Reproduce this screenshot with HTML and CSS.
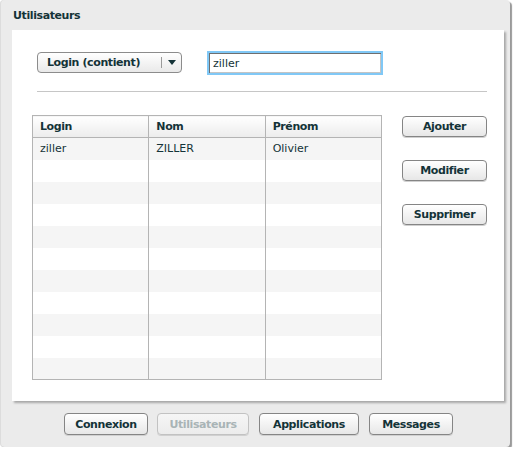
FILE: index.html
```html
<!DOCTYPE html>
<html lang="fr">
<head>
<meta charset="utf-8">
<title>Utilisateurs</title>
<link rel="stylesheet" href="styles.css">
</head>
<body>
<div class="window">
  <div class="window-title">Utilisateurs</div>
  <div class="content">
    <div class="search">
      <div class="combo">
        <span class="combo-label">Login (contient)</span>
        <span class="combo-sep"></span>
        <span class="combo-arrow"></span>
      </div>
      <input class="search-input" type="text" value="ziller">
    </div>
    <div class="divider"></div>
    <div class="main">
      <table class="grid">
        <thead>
          <tr><th>Login</th><th>Nom</th><th>Prénom</th></tr>
        </thead>
        <tbody>
          <tr><td>ziller</td><td>ZILLER</td><td>Olivier</td></tr>
          <tr><td></td><td></td><td></td></tr>
          <tr><td></td><td></td><td></td></tr>
          <tr><td></td><td></td><td></td></tr>
          <tr><td></td><td></td><td></td></tr>
          <tr><td></td><td></td><td></td></tr>
          <tr><td></td><td></td><td></td></tr>
          <tr><td></td><td></td><td></td></tr>
          <tr><td></td><td></td><td></td></tr>
          <tr><td></td><td></td><td></td></tr>
          <tr><td></td><td></td><td></td></tr>
        </tbody>
      </table>
      <div class="actions">
        <button class="btn btn-side">Ajouter</button>
        <button class="btn btn-side">Modifier</button>
        <button class="btn btn-side">Supprimer</button>
      </div>
    </div>
  </div>
  <div class="footer">
    <button class="btn btn-nav w84">Connexion</button>
    <button class="btn btn-nav w92" disabled>Utilisateurs</button>
    <button class="btn btn-nav w100">Applications</button>
    <button class="btn btn-nav w84">Messages</button>
  </div>
</div>
</body>
</html>
```
FILE: styles.css
```css
* { box-sizing: border-box; }
html, body {
  margin: 0;
  padding: 0;
  background: #ffffff;
  font-family: "DejaVu Sans", Verdana, sans-serif;
  font-size: 11px;
  color: #143338;
}
.window {
  width: 510px;
  height: 447px;
  background: #ebebeb;
  border-radius: 4px;
  box-shadow: 2px 2px 1px #9a9a9a, inset 1px 0 0 #dcdcdc;
  display: flex;
  flex-direction: column;
}
.window-title {
  height: 30px;
  padding: 9px 0 0 13px;
  font-weight: bold;
  letter-spacing: -0.4px;
}
.content {
  margin: 0 6px 0 12px;
  height: 371px;
  background: #ffffff;
  box-shadow: 2px 2px 2px #a8a8a8;
  padding: 21px 0 0 0;
}
.search {
  display: flex;
  align-items: flex-start;
  padding-left: 25px;
  height: 24px;
}
.combo {
  margin-top: 1px;
  width: 145px;
  height: 21px;
  border: 1px solid #8c8c8c;
  border-radius: 4px;
  background: linear-gradient(#ffffff, #e9e9e9);
  display: flex;
  align-items: center;
  font-weight: bold;
  letter-spacing: -0.4px;
}
.combo-label {
  padding-left: 9px;
  width: 123px;
}
.combo-sep {
  width: 1px;
  height: 11px;
  background: #9a9a9a;
}
.combo-arrow {
  margin-left: 6px;
  width: 0;
  height: 0;
  border-left: 4px solid transparent;
  border-right: 4px solid transparent;
  border-top: 5px solid #143338;
}
.search-input {
  margin: 0 0 0 25px;
  width: 176px;
  height: 24px;
  border: 2px solid #80c8f6;
  box-shadow: inset 1px 1px 0 #6e6e6e, inset -1px -1px 0 #c4c4c4;
  padding: 0 0 0 4px;
  font-family: "DejaVu Sans", Verdana, sans-serif;
  font-size: 11px;
  color: #143338;
  outline: none;
}
.divider {
  margin: 16px 17px 0 25px;
  height: 1px;
  background: #c6c6c6;
}
.main {
  display: flex;
  padding: 23px 0 0 20px;
}
.grid {
  width: 350px;
  border-collapse: collapse;
  border: 1px solid #b4b4b4;
  table-layout: fixed;
}
.grid th, .grid td {
  height: 22px;
  padding: 0 0 0 7px;
  text-align: left;
  border-left: 1px solid #b4b4b4;
  white-space: nowrap;
}
.grid th {
  font-weight: bold;
  letter-spacing: -0.4px;
  background: linear-gradient(#ffffff, #ececec);
  border-bottom: 1px solid #b4b4b4;
}
.grid tbody tr:nth-child(odd) td { background: #f5f5f5; }
.grid tbody tr:nth-child(even) td { background: #ffffff; }
.actions {
  display: flex;
  flex-direction: column;
  gap: 23px;
  margin-left: 20px;
  padding-top: 1px;
}
.btn {
  font-family: "DejaVu Sans", Verdana, sans-serif;
  font-size: 11px;
  font-weight: bold;
  letter-spacing: -0.4px;
  color: #143338;
  height: 21px;
  padding: 0;
  border: 1px solid #858585;
  border-radius: 4px;
  background: linear-gradient(#ffffff, #e7e7e7);
  box-shadow: 0 1px 0 #d0d0d0;
}
.btn-side { width: 85px; }
.footer {
  display: flex;
  gap: 9px;
  padding: 12px 0 0 64px;
}
.btn-nav { height: 22px; }
.btn-nav + .btn-nav + .btn-nav { margin-left: 1px; }
.btn[disabled] {
  color: #a9b4b6;
  border-color: #c2c2c2;
  background: linear-gradient(#f6f6f6, #ececec);
}
.w84 { width: 84px; }
.w92 { width: 92px; }
.w100 { width: 100px; }
```
